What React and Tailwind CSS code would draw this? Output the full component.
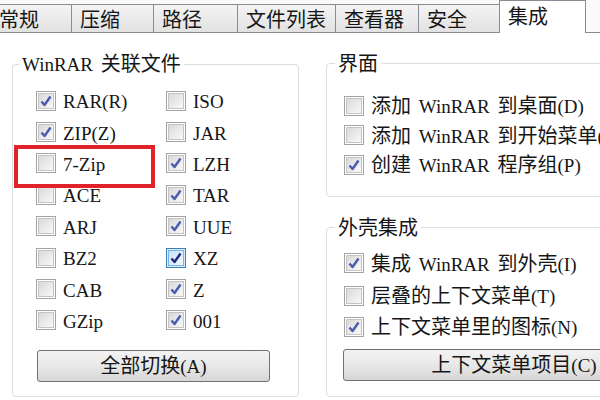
import React from 'react'

// latin runs in a serif face, a bit smaller than the CJK glyphs
function Txt({ s }) {
  return s
    .split(/([\x20-\x7e]+)/)
    .filter(Boolean)
    .map((p, i) =>
      /[\x20-\x7e]/.test(p) ? (
        <span
          key={i}
          className="text-[19px] [word-spacing:3px] font-['Liberation_Serif','Noto_Sans_CJK_SC',serif]"
        >
          {p}
        </span>
      ) : (
        <span key={i}>{p}</span>
      )
    )
}

function Box({ checked, hot }) {
  return (
    <span
      className={`w-[20px] h-[20px] shrink-0 border flex items-center justify-center ${
        hot ? 'border-[#3c7fb1] bg-[#dcecfc]' : 'border-[#a3a3a3] bg-white'
      }`}
    >
      <span
        className={`w-[16px] h-[16px] border flex items-center justify-center ${
          hot
            ? 'border-[#79b4e4] bg-gradient-to-br from-[#c9e2f8] to-[#f2f8fe]'
            : 'border-[#c4c4c4] bg-gradient-to-br from-[#d9d9d9] to-[#f9f9f9]'
        }`}
      >
        {checked && (
          <svg width="14" height="14" viewBox="0 0 14 14">
            <path
              d="M2.5 7.5 L5.5 11 L11.5 2.5"
              fill="none"
              stroke={hot ? '#1c2b7c' : '#4a5bb0'}
              strokeWidth="2.4"
              strokeLinejoin="round"
            />
          </svg>
        )}
      </span>
    </span>
  )
}

function Check({ label, checked, hot, h }) {
  return (
    <div className={`flex items-center gap-[7px] ${h}`}>
      <Box checked={checked} hot={hot} />
      <span className="text-[20px] leading-none text-[#161616] whitespace-nowrap">
        <Txt s={label} />
      </span>
    </div>
  )
}

function WinButton({ label, className }) {
  return (
    <div
      className={`h-[32px] rounded-[3px] border border-[#707070] bg-gradient-to-b from-[#f3f3f3] via-[#e8e8e8] to-[#d6d6d6] flex items-center justify-center text-[20px] text-[#161616] shrink-0 ${className}`}
    >
      <span className="whitespace-nowrap"><Txt s={label} /></span>
    </div>
  )
}

function Group({ title, className, legend, children }) {
  return (
    <fieldset className={`border border-[#d5dfe5] rounded-[4px] shrink-0 ${className}`}>
      <legend className={`px-[3px] text-[20px] leading-[24px] text-[#161616] ${legend}`}>
        <Txt s={title} />
      </legend>
      {children}
    </fieldset>
  )
}

const tabs = [
  { label: '常规', w: 'w-[81px]' },
  { label: '压缩', w: 'w-[82px]' },
  { label: '路径', w: 'w-[84px]' },
  { label: '文件列表', w: 'w-[98px]' },
  { label: '查看器', w: 'w-[83px]' },
  { label: '安全', w: 'w-[81px]' },
]

const leftCol = [
  ['RAR(R)', true],
  ['ZIP(Z)', true],
  ['7-Zip', false],
  ['ACE', false],
  ['ARJ', false],
  ['BZ2', false],
  ['CAB', false],
  ['GZip', false],
]

const rightCol = [
  ['ISO', false],
  ['JAR', false],
  ['LZH', true],
  ['TAR', true],
  ['UUE', true],
  ['XZ', true, true],
  ['Z', true],
  ['001', true],
]

export default function App() {
  return (
    <div className="w-[600px] h-[400px] bg-white overflow-hidden relative font-['Noto_Sans_CJK_SC','Liberation_Serif',sans-serif]">
      {/* Tabs */}
      <div className="h-[33px] flex items-end border-b border-[#898c95] bg-[#fafafa]">
        <div className="flex items-end ml-[-10px]">
          {tabs.map((t) => (
            <div
              key={t.label}
              className={`${t.w} h-[28px] border-l border-t border-[#898c95] bg-gradient-to-b from-[#f4f4f4] to-[#e2e2e2] pl-[8px] pt-[3px] text-[20px] leading-[22px] text-[#161616] shrink-0`}
            >
              {t.label}
            </div>
          ))}
          <div className="w-[87px] h-[33px] -mb-px border border-b-0 border-[#898c95] bg-white pl-[8px] pt-[4px] text-[20px] leading-[22px] text-[#161616] shrink-0 relative z-10">
            集成
          </div>
        </div>
      </div>

      {/* Body */}
      <div className="flex pt-[18px] pl-[12px] gap-[27px]">
        <Group
          title="WinRAR 关联文件"
          legend="-ml-[17px]"
          className="w-[287px] h-[346px] pl-[23px] pt-[8px]"
        >
          <div className="flex">
            <div className="w-[130px] flex flex-col">
              {leftCol.map(([l, c]) => (
                <Check key={l} label={l} checked={c} h="h-[31.4px]" />
              ))}
            </div>
            <div className="flex flex-col">
              {rightCol.map(([l, c, hot]) => (
                <Check key={l} label={l} checked={c} hot={hot} h="h-[31.4px]" />
              ))}
            </div>
          </div>
          <WinButton label="全部切换(A)" className="w-[233px] mt-[14px] ml-px" />
        </Group>

        <div className="flex flex-col gap-[18px]">
          <Group title="界面" legend="-ml-[9px]" className="w-[320px] h-[146px] pl-[17px] pt-[16px]">
            <Check label="添加 WinRAR 到桌面(D)" h="h-[29.5px]" />
            <Check label="添加 WinRAR 到开始菜单(S)" h="h-[29.5px]" />
            <Check label="创建 WinRAR 程序组(P)" checked h="h-[29.5px]" />
          </Group>
          <Group title="外壳集成" legend="-ml-[9px]" className="w-[320px] h-[182px] pl-[17px] pt-[7px]">
            <Check label="集成 WinRAR 到外壳(I)" checked h="h-[34px]" />
            <Check label="层叠的上下文菜单(T)" h="h-[31px]" />
            <Check label="上下文菜单里的图标(N)" checked h="h-[31px]" />
            <WinButton label="上下文菜单项目(C)" className="w-[342px] mt-[7px] -ml-px" />
          </Group>
        </div>
      </div>

      {/* red highlight around 7-Zip */}
      <div className="absolute left-[14px] top-[145px] w-[141px] h-[43px] border-[4px] border-[#e1222b]" />
    </div>
  )
}
